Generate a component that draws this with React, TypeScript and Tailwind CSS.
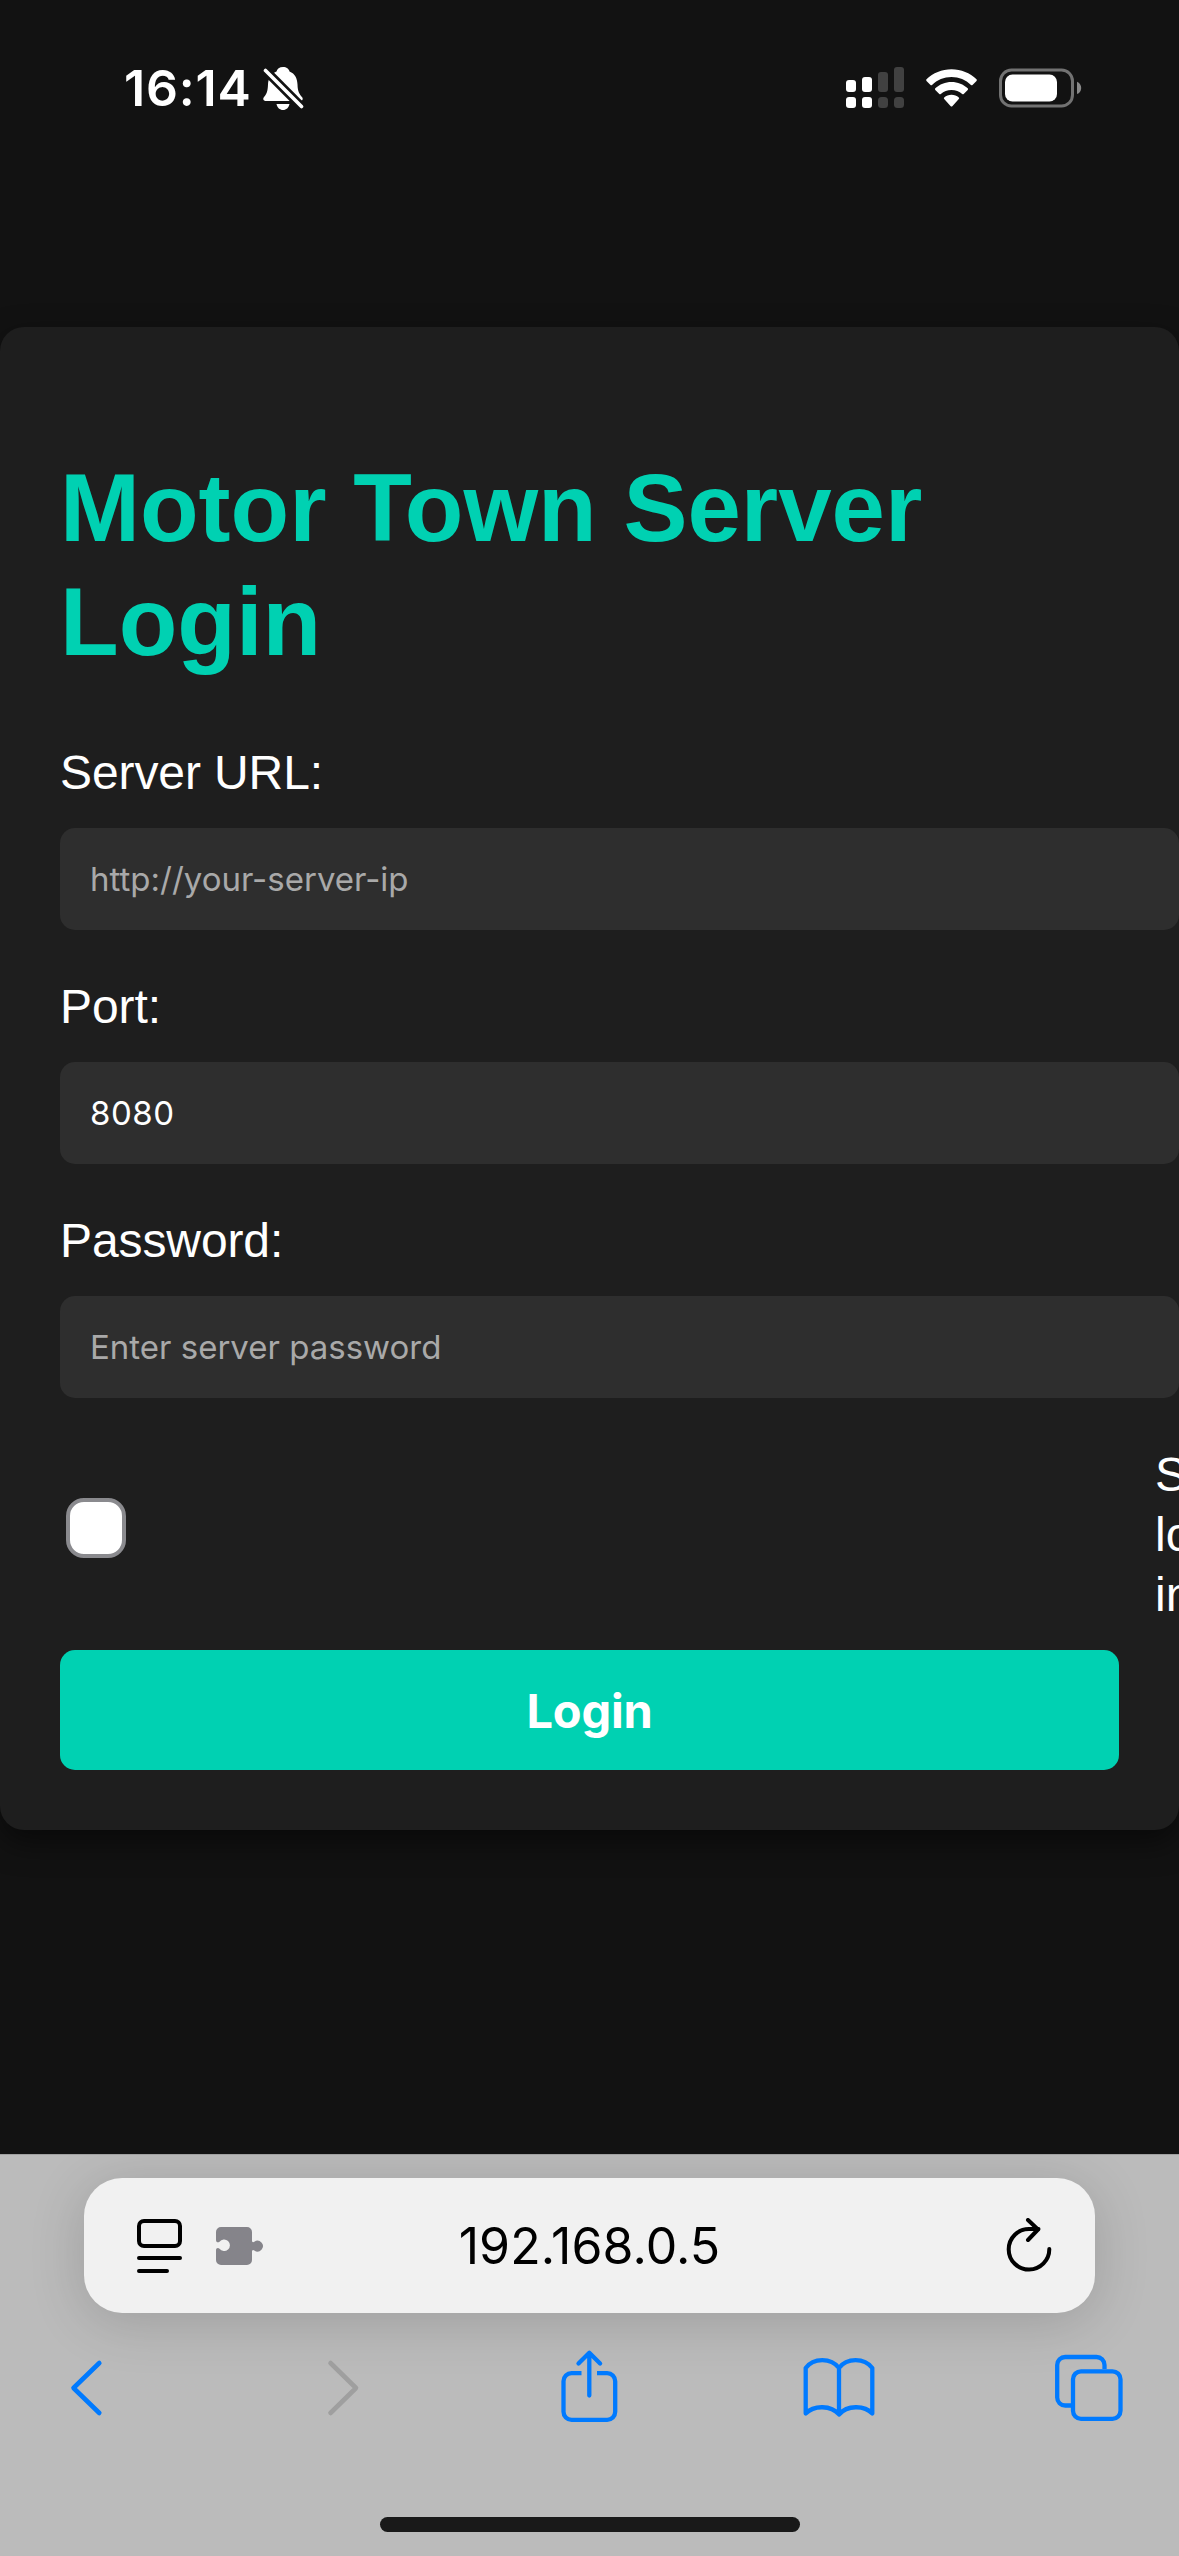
import React from "react";

type FieldProps = {
  label: string;
  type?: string;
  placeholder?: string;
  value?: string;
};

function Field({ label, type = "text", placeholder, value }: FieldProps) {
  return (
    <div className="mb-[47px] flex flex-col">
      <label className="mb-[25px] text-5xl leading-[60px] tracking-[-0.1px]">{label}</label>
      <input
        type={type}
        placeholder={placeholder}
        defaultValue={value}
        className="h-[102px] w-[1119px] rounded-[15px] bg-[#2e2e2e] px-[30px] font-['Inter',sans-serif] text-[33px] tracking-[0.5px] text-white outline-none placeholder:tracking-normal placeholder:text-[#a9a9a9]"
      />
    </div>
  );
}

function BellSlash() {
  return (
    <svg width="42" height="46" viewBox="262 65 42 46">
      <path
        d="M283 67c-3.500 0-6 2-6.500 4.500-5.500 2.200-8.200 7-8.500 13-.3 7-1.300 9.500-4 12.500-1.400 1.700-.7 4 2 4h34c2.700 0 3.400-2.300 2-4-2.700-3-4.300-5.500-4.500-12.500-.2-6-2.500-10.800-8-13-.5-2.500-3-4.500-6.500-4.500z"
        fill="#fff"
      />
      <path d="M276.500 104h13c-.7 3.700-3.300 6-6.500 6s-5.800-2.300-6.500-6z" fill="#fff" />
      <path d="M264.500 69.500L302 107" stroke="#121212" strokeWidth="9" />
      <path d="M265.500 70.500L301.500 106.500" stroke="#fff" strokeWidth="3.600" strokeLinecap="round" />
    </svg>
  );
}

function Signal() {
  return (
    <svg width="58" height="42" viewBox="846 67 58 42">
      <g fill="#fff">
        <rect x="846" y="80" width="10" height="12" rx="3" />
        <rect x="862" y="77" width="10" height="15" rx="3" />
        <rect x="846" y="97" width="10" height="11" rx="3" />
        <rect x="862" y="97" width="10" height="11" rx="3" />
      </g>
      <g fill="#414141">
        <rect x="878" y="72" width="10" height="20" rx="3" />
        <rect x="894" y="67" width="10" height="25" rx="3" />
        <rect x="878" y="97" width="10" height="11" rx="3.500" />
        <rect x="894" y="97" width="10" height="11" rx="3.500" />
      </g>
    </svg>
  );
}

function Wifi() {
  return (
    <svg width="51" height="38" viewBox="926 68.500 51 38" fill="#fff">
      <path d="M951.500 68.800c9.700 0 18.500 3.800 25 10 .5.500.5 1.100 0 1.600l-4 4c-.5.500-1 .5-1.500 0-5.200-4.900-12-7.900-19.500-7.900s-14.300 3-19.500 7.900c-.5.500-1 .5-1.500 0l-4-4c-.5-.5-.5-1.100 0-1.600 6.500-6.200 15.300-10 25-10z" />
      <path d="M951.500 81.500c6.200 0 11.900 2.400 16.200 6.300.5.500.5 1.100 0 1.600l-4 4c-.5.500-1 .5-1.500 0-2.900-2.500-6.600-4-10.700-4s-7.800 1.500-10.700 4c-.5.500-1 .5-1.500 0l-4-4c-.5-.5-.5-1.100 0-1.600 4.300-3.900 10-6.300 16.200-6.300z" />
      <path d="M951.500 94.300c2.800 0 5.300 1 7.300 2.600.5.500.5 1 0 1.500l-6.500 7.300c-.5.500-1.100.5-1.600 0l-6.500-7.300c-.5-.5-.5-1 0-1.500 2-1.600 4.500-2.600 7.300-2.600z" />
    </svg>
  );
}

function Battery() {
  return (
    <svg width="83" height="40" viewBox="999 67.500 83 40">
      <rect x="1000.500" y="69.500" width="72" height="36" rx="11" fill="none" stroke="#727272" strokeWidth="3" />
      <rect x="1005" y="74" width="52" height="27" rx="7.500" fill="#fff" />
      <path d="M1077 81.200c2.600 1 4.200 3.400 4.200 6.200s-1.600 5.200-4.200 6.200z" fill="#898989" />
    </svg>
  );
}

function StatusBar() {
  return (
    <header className="flex h-[175px] items-center pr-[97px] pl-[124px]">
      <span className="w-[138px] font-['Inter',sans-serif] text-[50px] leading-[60px] font-semibold tracking-[0.8px]">
        16:14
      </span>
      <BellSlash />
      <div className="ml-auto flex items-center gap-[22px]">
        <Signal />
        <Wifi />
        <Battery />
      </div>
    </header>
  );
}

function LoginCard() {
  return (
    <main className="mt-[152px] h-[1503px] rounded-[24px] bg-[#1e1e1e] px-[60px] pt-[124px] shadow-[0_12px_30px_rgba(0,0,0,0.5)]">
      <h1 className="mb-[64px] text-8xl leading-[114px] font-bold text-[#00d1b2]">Motor Town Server Login</h1>
      <Field label="Server URL:" placeholder="http://your-server-ip" />
      <Field label="Port:" value="8080" />
      <Field label="Password:" type="password" placeholder="Enter server password" />
      <div className="flex h-[180px] w-[1240px] items-center pl-[6px]">
        <input
          type="checkbox"
          className="mr-[1029px] mb-[14px] size-[60px] shrink-0 appearance-none rounded-[18px] border-4 border-[#8a8a8e] bg-white"
        />
        <label className="w-[110px] text-5xl leading-[60px]">Save login info</label>
      </div>
      <button className="mt-[25px] h-[120px] w-full rounded-[15px] bg-[#00d1b2] pt-[2px] font-['Inter',sans-serif] text-[47px] font-bold tracking-[-0.2px]">
        Login
      </button>
    </main>
  );
}

function ReaderIcon() {
  return (
    <svg width="46" height="56" viewBox="137 2218 46 56" fill="none" stroke="#000" strokeWidth="4" strokeLinecap="round">
      <rect x="139" y="2221" width="41" height="25" rx="5" />
      <path d="M139 2258h41M139 2271h28" />
    </svg>
  );
}

function PuzzleIcon() {
  return (
    <svg width="48" height="40" viewBox="216 2226 48 40" fill="#85848a">
      <path d="M221 2227h26a5 5 0 0 1 5 5v9.200a1.500 1.500 0 0 0 2.300 .5a5.400 5.400 0 1 1 0 8.800a1.500 1.500 0 0 0-2.300 .5v9a5 5 0 0 1-5 5H221a5 5 0 0 1-5-5v-9.500c0-2.500 2-3 3.500-1.800a5.800 5.800 0 1 0 0-7c-1.500 1.200-3.500.7-3.500-1.800V2232a5 5 0 0 1 5-5z" />
    </svg>
  );
}

function ReloadIcon() {
  return (
    <svg
      width="46"
      height="56"
      viewBox="1006 2217 46 56"
      fill="none"
      stroke="#000"
      strokeWidth="4"
      strokeLinecap="round"
      strokeLinejoin="round"
    >
      <path d="M1049.300 2248A20.300 20.300 0 1 1 1029 2228h9.500" />
      <path d="M1028 2219l10 9.500l-10 10.500" />
    </svg>
  );
}

function AddressBar() {
  return (
    <div className="mx-[84px] flex h-[135px] items-center rounded-[38px] bg-[#f1f1f1] pr-[43px] pl-[53px] shadow-[0_8px_56px_rgba(0,0,0,0.16)]">
      <ReaderIcon />
      <div className="ml-[33px]">
        <PuzzleIcon />
      </div>
      <span className="flex-1 pt-[2px] pr-[49px] text-center font-['Inter',sans-serif] text-[50px] tracking-[0.1px] text-black">
        192.168.0.5
      </span>
      <div className="w-[88px] pl-[42px]">
        <ReloadIcon />
      </div>
    </div>
  );
}

function Toolbar() {
  return (
    <nav className="flex items-start pl-[70px] text-[#007aff]" aria-label="Browser">
      <svg width="34" height="76" viewBox="70 2349 34 76" fill="none" stroke="currentColor" strokeWidth="4.600" strokeLinecap="round" strokeLinejoin="round">
        <path d="M99.300 2363L73.500 2388l25.800 25" />
      </svg>
      <svg width="34" height="76" viewBox="327 2349 34 76" fill="none" stroke="#9f9f9f" strokeWidth="4.600" strokeLinecap="round" strokeLinejoin="round" className="ml-[223px]">
        <path d="M330.500 2363l25.500 25l-25.500 25" />
      </svg>
      <svg width="58" height="76" viewBox="560 2349 58 76" fill="none" stroke="currentColor" strokeWidth="4.300" strokeLinejoin="round" className="ml-[199px]">
        <path d="M581.500 2373.200h-10a8 8 0 0 0-8 8v30.600a8 8 0 0 0 8 8h35.700a8 8 0 0 0 8-8v-30.600a8 8 0 0 0-8-8H597" />
        <path d="M589.300 2395.500V2353.500M578.500 2363.500l10.800-10.700l10.800 10.700" strokeLinecap="round" />
      </svg>
      <svg width="74" height="76" viewBox="802.500 2349 74 76" fill="none" stroke="currentColor" strokeWidth="4.300" strokeLinejoin="round" className="ml-[184px]">
        <path d="M839.500 2368c-8-10.500-25.500-10.500-33.300 0v45.500c8-8.500 25.500-8.500 33.300 1c8-9.500 25.500-9.500 33.300-1V2368c-8-10.500-25.500-10.500-33.300 0zV2414" />
      </svg>
      <svg width="70" height="76" viewBox="1054 2349 70 76" fill="none" stroke="currentColor" strokeWidth="4.300" className="ml-[178px]">
        <path d="M1104.500 2369v-4a8 8 0 0 0-8-8h-31.300a8 8 0 0 0-8 8v32.500a8 8 0 0 0 8 8h6" />
        <rect x="1073" y="2371.300" width="47.500" height="47.500" rx="8" />
      </svg>
    </nav>
  );
}

export default function App() {
  return (
    <div className="flex h-[2556px] w-[1179px] flex-col overflow-hidden bg-[#121212] font-['Liberation_Sans',Arial,sans-serif] text-white">
      <StatusBar />
      <LoginCard />
      <footer className="mt-auto flex h-[402px] flex-col overflow-hidden border-t border-[#a0a0a0] bg-[#bbbbbb] pt-[23px]">
        <AddressBar />
        <div className="mt-[36px]">
          <Toolbar />
        </div>
        <div className="mx-auto mt-auto mb-[24px] h-[15px] w-[420px] rounded-full bg-[#191919]" />
      </footer>
    </div>
  );
}
